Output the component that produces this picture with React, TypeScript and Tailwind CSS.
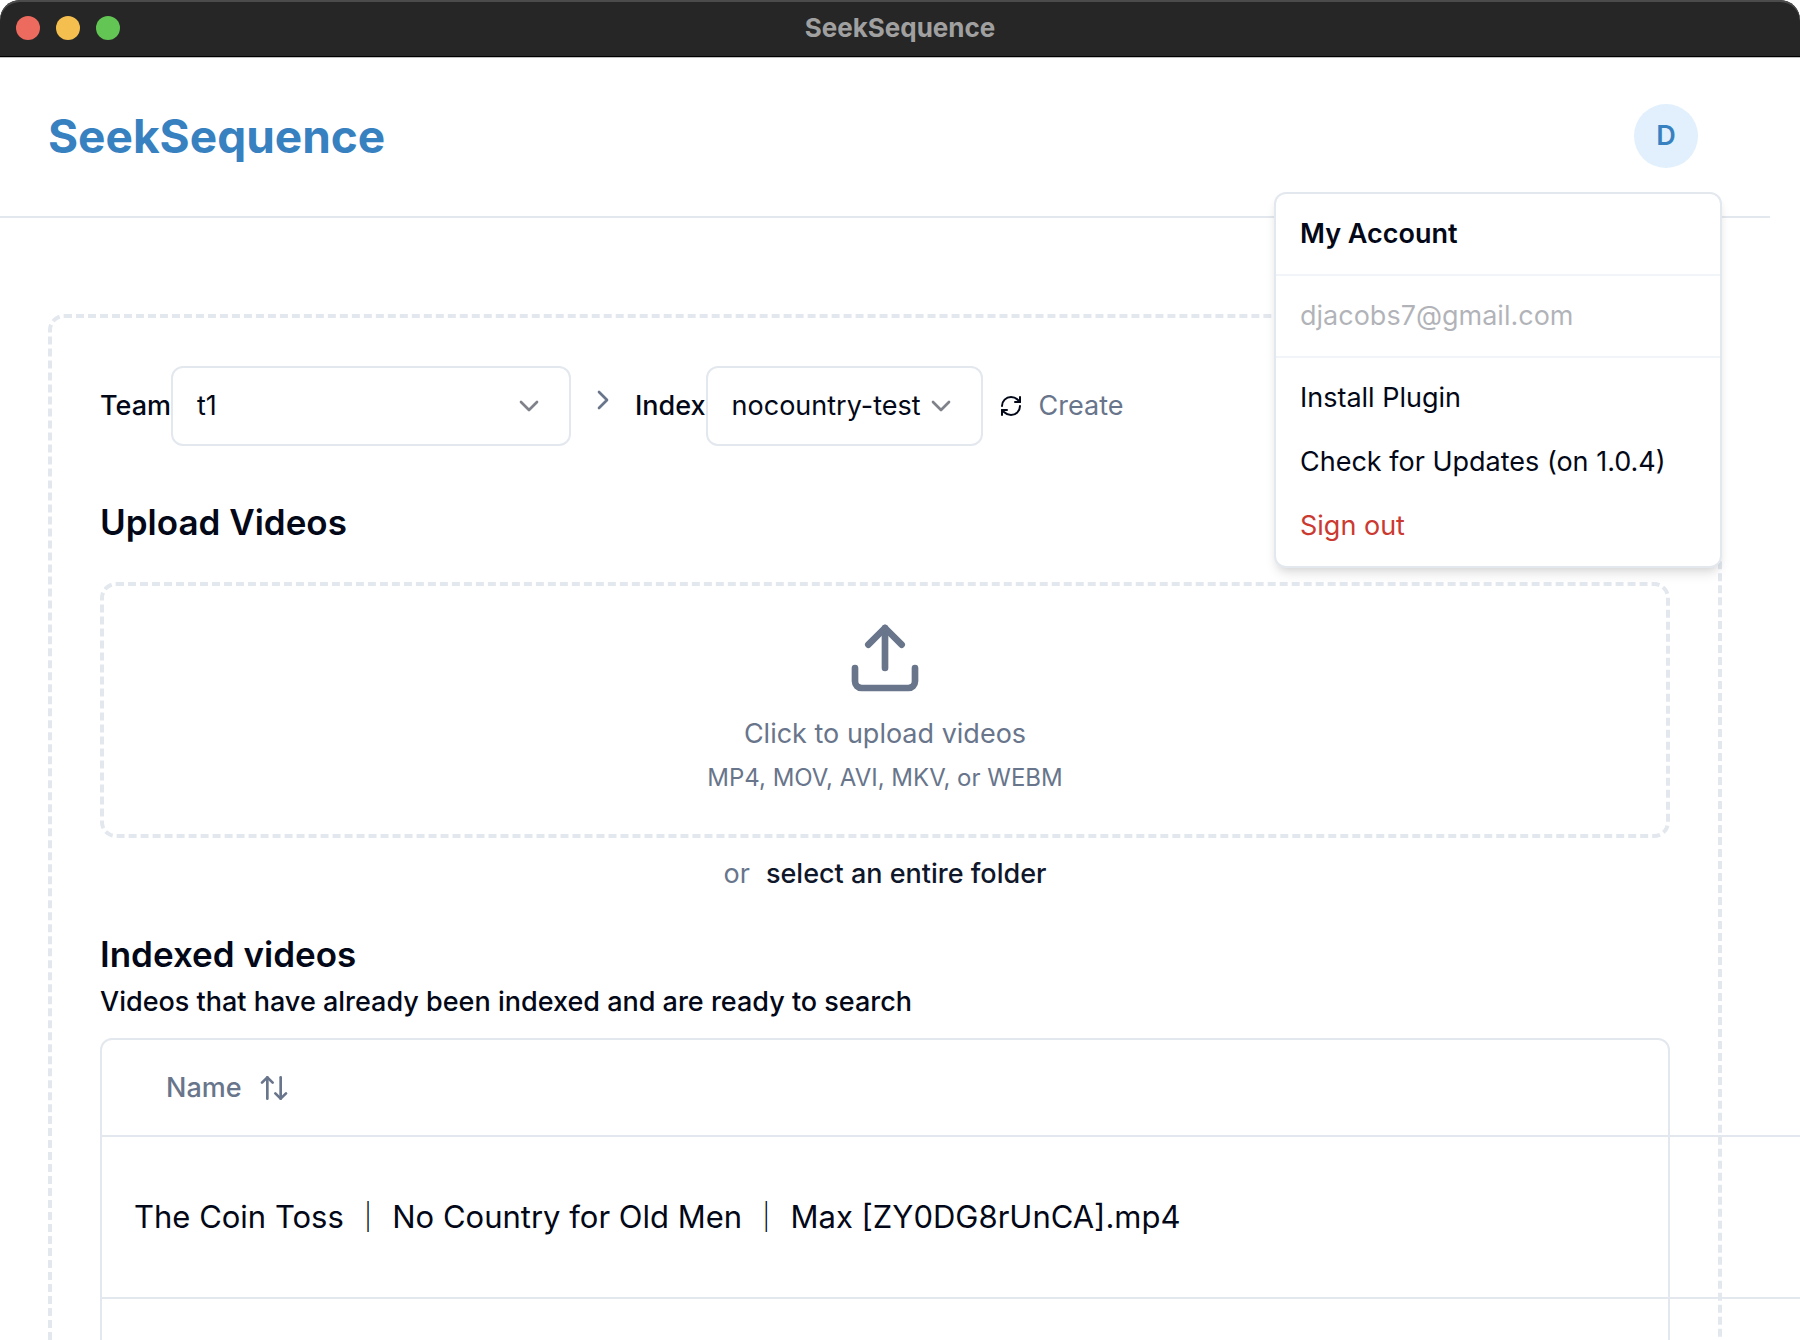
import React, { useState } from 'react';
import { ArrowUpDown, ChevronDown, ChevronRight, RefreshCw, Upload } from 'lucide-react';

const videos = ['The Coin Toss ｜ No Country for Old Men ｜ Max [ZY0DG8rUnCA].mp4', ''];

const TitleBar: React.FC = () => (
  <div className="flex h-[57px] shrink-0 items-center rounded-t-[20px] border-b border-black bg-[#262626] px-4 shadow-[inset_0_2px_0_#4b4b4b]">
    <div className="flex flex-1 gap-4">
      <span className="size-6 rounded-full bg-[#ed6a5e]" />
      <span className="size-6 rounded-full bg-[#f5bf4f]" />
      <span className="size-6 rounded-full bg-[#62c554]" />
    </div>
    <p className="text-[26px] leading-8 font-bold text-[#a0a0a0]">SeekSequence</p>
    <div className="flex-1" />
  </div>
);

interface IMenuItem {
  label: string;
  extraClassName?: string;
}

const MenuItem: React.FC<IMenuItem> = ({ label, extraClassName = '' }) => (
  <button
    type="button"
    role="menuitem"
    className={`block w-full px-4 py-3 text-left text-[27px] leading-10 ${extraClassName}`}
  >
    {label}
  </button>
);

const AccountMenu: React.FC = () => {
  const [open, setOpen] = useState(true);

  return (
    <div className="relative pr-6">
      <button
        type="button"
        aria-haspopup="menu"
        aria-expanded={open}
        onClick={() => setOpen(!open)}
        className="flex size-16 items-center justify-center rounded-full bg-[#e1f0fc] text-[27px] leading-10 font-semibold text-[#3781c1]"
      >
        D
      </button>
      {open && (
        <div
          role="menu"
          className="absolute top-full right-0 z-10 mt-6 w-[448px] rounded-xl border-2 border-[#e3e8ef] bg-white py-2 shadow-[0_8px_12px_-2px_rgba(0,0,0,0.1),0_4px_8px_-4px_rgba(0,0,0,0.1)]"
        >
          <div className="px-2">
            <p className="px-4 py-3 text-[27px] leading-10 font-semibold">My Account</p>
          </div>
          <div className="my-2 h-0.5 bg-slate-100" />
          <div className="px-2">
            <p className="px-4 py-3 text-[27px] leading-10 opacity-30">djacobs7@gmail.com</p>
          </div>
          <div className="my-2 h-0.5 bg-slate-100" />
          <div className="px-2">
            <MenuItem label="Install Plugin" />
            <MenuItem label="Check for Updates (on 1.0.4)" extraClassName="whitespace-nowrap" />
            <MenuItem label="Sign out" extraClassName="text-[#cb3a31]" />
          </div>
        </div>
      )}
    </div>
  );
};

interface IPicker {
  id: string;
  label: string;
  value: string;
  widthClassName: string;
}

const Picker: React.FC<IPicker> = ({ id, label, value, widthClassName }) => (
  <div className="flex items-center">
    <label htmlFor={id} className="text-[27px] leading-10 font-medium">
      {label}
    </label>
    <div className={`relative ${widthClassName}`}>
      <select
        id={id}
        defaultValue={value}
        className="h-20 w-full appearance-none rounded-xl border-2 border-[#e3e8ef] bg-white px-6 text-[27px] leading-10"
      >
        <option value={value}>{value}</option>
      </select>
      <ChevronDown className="pointer-events-none absolute top-6 right-[26px] size-8 opacity-50" />
    </div>
  </div>
);

const VideoTable: React.FC = () => (
  <div className="mt-4 rounded-xl border-2 border-[#e3e8ef]">
    <table className="w-[125%]">
      <thead>
        <tr className="border-b-2 border-[#e3e8ef]">
          <th className="h-24 px-8 text-left font-medium text-[#68758b]">
            <button type="button" className="flex items-center gap-4 px-8 text-[27px] leading-10">
              Name
              <ArrowUpDown className="size-8" />
            </button>
          </th>
        </tr>
      </thead>
      <tbody>
        {videos.map((name, i) => (
          <tr key={i} className="border-b-2 border-[#e3e8ef]">
            <td className="h-[162px] px-8 text-[31px] leading-12">{name}</td>
          </tr>
        ))}
      </tbody>
    </table>
  </div>
);

const App: React.FC = () => (
  <div className="flex h-screen flex-col overflow-hidden bg-white font-['Inter','Noto_Sans_CJK_JP',sans-serif] text-[#020817]">
    <TitleBar />
    <div className="min-h-0 flex-1 border-t border-[#c0c0c0] pr-[30px]">
      <header className="flex h-40 items-start justify-between border-b-2 border-[#e3e8ef] px-12 pt-[46px]">
        <h1 className="text-[46px] leading-16 font-bold text-[#3781c1]">SeekSequence</h1>
        <AccountMenu />
      </header>

      <main className="px-12 pt-24">
        <div className="rounded-2xl border-4 border-dashed border-[#e3e8ef] p-12">
          <div className="flex items-center">
            <Picker id="team" label="Team" value="t1" widthClassName="w-[400px]" />
            <ChevronRight className="mx-4 mb-3 size-8 text-[#68758b]" />
            <Picker id="index" label="Index" value="nocountry-test" widthClassName="w-[277px]" />
            <button type="button" aria-label="Refresh" className="ml-4">
              <RefreshCw className="size-6" />
            </button>
            <button type="button" className="ml-4 text-[27px] leading-10 text-[#68758b]">
              Create
            </button>
          </div>

          <h2 className="mt-12 text-[35px] leading-14 font-semibold">Upload Videos</h2>
          <button
            type="button"
            className="mt-8 flex w-full flex-col items-center rounded-2xl border-4 border-dashed border-[#e3e8ef] px-8 pt-8 pb-10 text-[#68758b]"
          >
            <Upload className="size-20" />
            <span className="mt-4 text-[27px] leading-10">Click to upload videos</span>
            <span className="mt-2 text-2xl">MP4, MOV, AVI, MKV, or WEBM</span>
          </button>
          <div className="mt-4 flex justify-center gap-4 text-[27px] leading-10">
            <span className="text-[#68758b]">or</span>
            <button type="button" className="font-medium text-slate-900">
              select an entire folder
            </button>
          </div>

          <h2 className="mt-8 text-[35px] leading-14 font-semibold">Indexed videos</h2>
          <p className="text-[27px] leading-10 font-medium">
            Videos that have already been indexed and are ready to search
          </p>
          <VideoTable />
        </div>
      </main>
    </div>
  </div>
);

export default App;
